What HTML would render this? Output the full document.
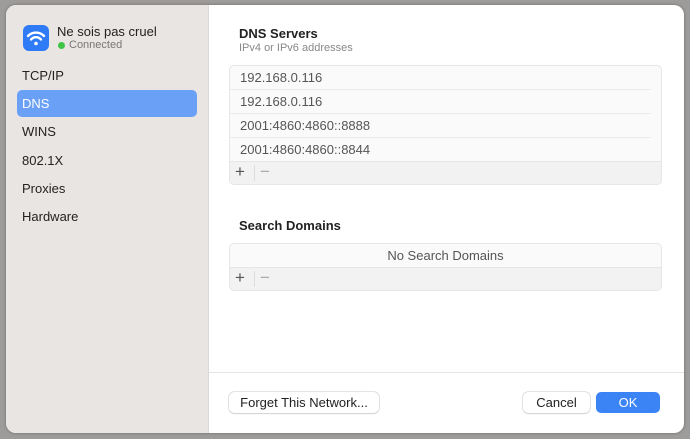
<!DOCTYPE html>
<html><head><style>
body{margin:0;width:690px;height:439px;background:#9e9c9a;font-family:"Liberation Sans",sans-serif;position:relative;overflow:hidden}
.dlg{position:absolute;left:6px;top:5px;width:678px;height:428px;border-radius:10px;background:#fff;overflow:hidden;box-shadow:0 0 3px rgba(0,0,0,.3)}
.side{position:absolute;left:0;top:0;width:202px;height:100%;background:#e9e5e2;border-right:1px solid #dcd8d5}
.a{position:absolute;font-size:13px;color:#222;white-space:nowrap}
.sel{position:absolute;left:11px;top:85px;width:180px;height:27px;background:#6aa1f7;border-radius:5px}
.box{position:absolute;left:223px;width:431px;border:1px solid #e6e6e6;border-radius:5px;background:#fafafa;overflow:hidden}
.row{height:23px;line-height:24px;font-size:13px;color:#555;padding-left:10px;border-bottom:1px solid #ebebeb;margin-right:10px}
.ft{height:22px;background:#f2f2f2;position:relative;font-size:17px;color:#555}
.btn{position:absolute;top:387px;height:21px;line-height:21px;font-size:13px;text-align:center;border-radius:5px;background:#fff;box-shadow:0 0 0 .5px #c8c8c8,0 1px 1px rgba(0,0,0,.15);color:#222}
</style></head><body>
<div class="dlg">
<div class="side">
<svg style="position:absolute;left:17px;top:20px" width="26" height="26" viewBox="0 0 26 26"><rect width="26" height="26" rx="6" fill="#2f7bf5"/><g fill="none" stroke="#fff" stroke-width="2.4" stroke-linecap="round"><path d="M5 11a11 11 0 0 1 16 0"/><path d="M8 14.5a6.5 6.5 0 0 1 10 0"/></g><circle cx="13" cy="18.5" r="1.8" fill="#fff"/></svg>
<div class="a" style="left:51px;top:19px;font-size:13px">Ne sois pas cruel</div>
<div style="position:absolute;left:52px;top:37px;width:7px;height:7px;border-radius:50%;background:#3ec545"></div>
<div class="a" style="left:63px;top:34px;font-size:11px;color:#777">Connected</div>
<div class="a" style="left:16px;top:63px">TCP/IP</div>
<div class="sel"></div>
<div class="a" style="left:16px;top:91px;color:#fff">DNS</div>
<div class="a" style="left:16px;top:119px">WINS</div>
<div class="a" style="left:16px;top:148px">802.1X</div>
<div class="a" style="left:16px;top:176px">Proxies</div>
<div class="a" style="left:16px;top:204px">Hardware</div>
</div>
<div class="a" style="left:233px;top:21px;font-weight:bold">DNS Servers</div>
<div class="a" style="left:233px;top:37px;font-size:11px;color:#888">IPv4 or IPv6 addresses</div>
<div class="box" style="top:60px">
<div class="row">192.168.0.116</div><div class="row">192.168.0.116</div><div class="row">2001:4860:4860::8888</div><div class="row" style="border-bottom:1px solid #e6e6e6;margin-right:0">2001:4860:4860::8844</div>
<div class="ft"><span style="position:absolute;left:5px;top:0px">+</span><span style="position:absolute;left:24px;top:3px;width:1px;height:16px;background:#ddd"></span><span style="position:absolute;left:30px;top:0px;color:#aaa">−</span></div>
</div>
<div class="a" style="left:233px;top:213px;font-weight:bold">Search Domains</div>
<div class="box" style="top:238px">
<div class="row" style="text-align:center;padding:0;margin:0;border-bottom:1px solid #e6e6e6">No Search Domains</div>
<div class="ft"><span style="position:absolute;left:5px;top:0px">+</span><span style="position:absolute;left:24px;top:3px;width:1px;height:16px;background:#ddd"></span><span style="position:absolute;left:30px;top:0px;color:#aaa">−</span></div>
</div>
<div style="position:absolute;left:203px;top:367px;right:0;height:1px;background:#e5e5e5"></div>
<div class="btn" style="left:223px;width:150px">Forget This Network...</div>
<div class="btn" style="left:517px;width:67px">Cancel</div>
<div class="btn" style="left:590px;width:64px;background:#3b84f5;color:#fff;box-shadow:none">OK</div>
</div>
</body></html>
